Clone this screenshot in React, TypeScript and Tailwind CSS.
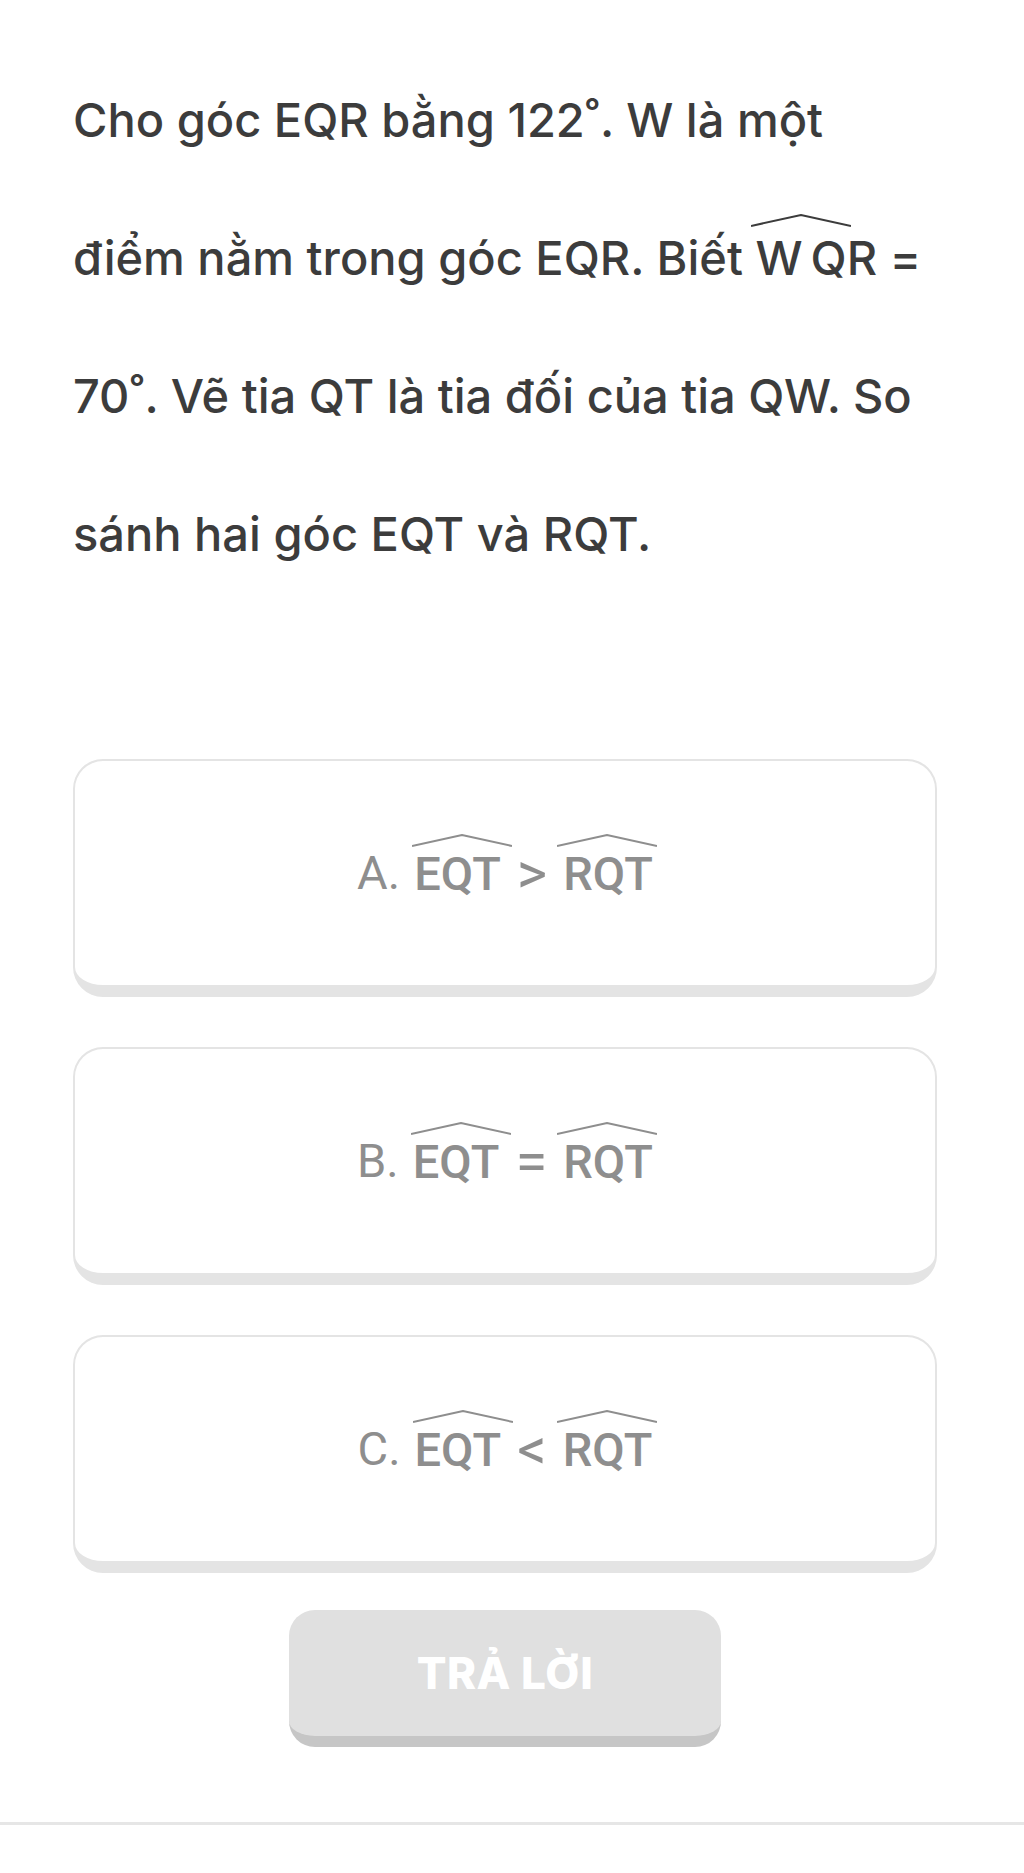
import type { ReactNode } from "react";

function Hat({ children, hatClass }: { children: ReactNode; hatClass: string }) {
  return (
    <span className="relative inline-block leading-none">
      <svg
        className={`absolute h-[13px] ${hatClass}`}
        viewBox="0 0 100 13"
        preserveAspectRatio="none"
        fill="none"
      >
        <polyline
          points="0,12 50,1 100,12"
          stroke="currentColor"
          strokeWidth="2"
          vectorEffect="non-scaling-stroke"
        />
      </svg>
      {children}
    </span>
  );
}

const options = [
  { label: "A.", op: ">" },
  { label: "B.", op: "=" },
  { label: "C.", op: "<" },
];

export default function App() {
  return (
    <div className="min-h-[1873px] bg-white">
      <div className="pl-[73px] pr-[87px] pt-[51px]">
        <p className="font-['Inter','Noto_Sans',sans-serif] text-[47px] font-medium leading-[138px] text-[#3c3c3c]">
          Cho góc EQR bằng 122˚. W là một
          <br />
          điểm nằm trong góc EQR. Biết{" "}
          <Hat hatClass="-left-[4px] -right-[2px] -top-[20px] text-[#3c3c3c]">
            <span className="mr-[8px]">W</span>QR
          </Hat>{" "}
          =
          <br />
          70˚. Vẽ tia QT là tia đối của tia QW. So
          <br />
          sánh hai góc EQT và RQT.
        </p>

        <ul className="mt-[156px] flex flex-col gap-[50px]">
          {options.map((o) => (
            <li
              key={o.label}
              className="flex h-[238px] items-center justify-center rounded-[30px] border-2 border-b-[12px] border-[#e4e4e4] bg-white font-['Roboto',sans-serif] text-[47px] text-[#8e8e8e]"
            >
              <span className="mr-[14px]">{o.label}</span>
              <Hat hatClass="-left-[2px] -right-[7px] -top-[16px]">
                <span className="font-medium">EQT</span>
              </Hat>
              <span className="mx-[16px] text-[58px] leading-none">{o.op}</span>
              <Hat hatClass="-left-[6px] -right-[8px] -top-[16px]">
                <span className="font-medium">RQT</span>
              </Hat>
            </li>
          ))}
        </ul>

        <div className="mt-[37px] flex justify-center">
          <button className="flex h-[137px] w-[432px] items-center justify-center rounded-[26px] border-b-[11px] border-[#c6c6c6] bg-[#e0e0e0] font-['Inter',sans-serif] text-[44px] font-extrabold tracking-[0.5px] text-white">
            TRẢ LỜI
          </button>
        </div>
      </div>
      <div className="mt-[75px] h-[3px] w-full bg-[#e6e6e6]" />
    </div>
  );
}
